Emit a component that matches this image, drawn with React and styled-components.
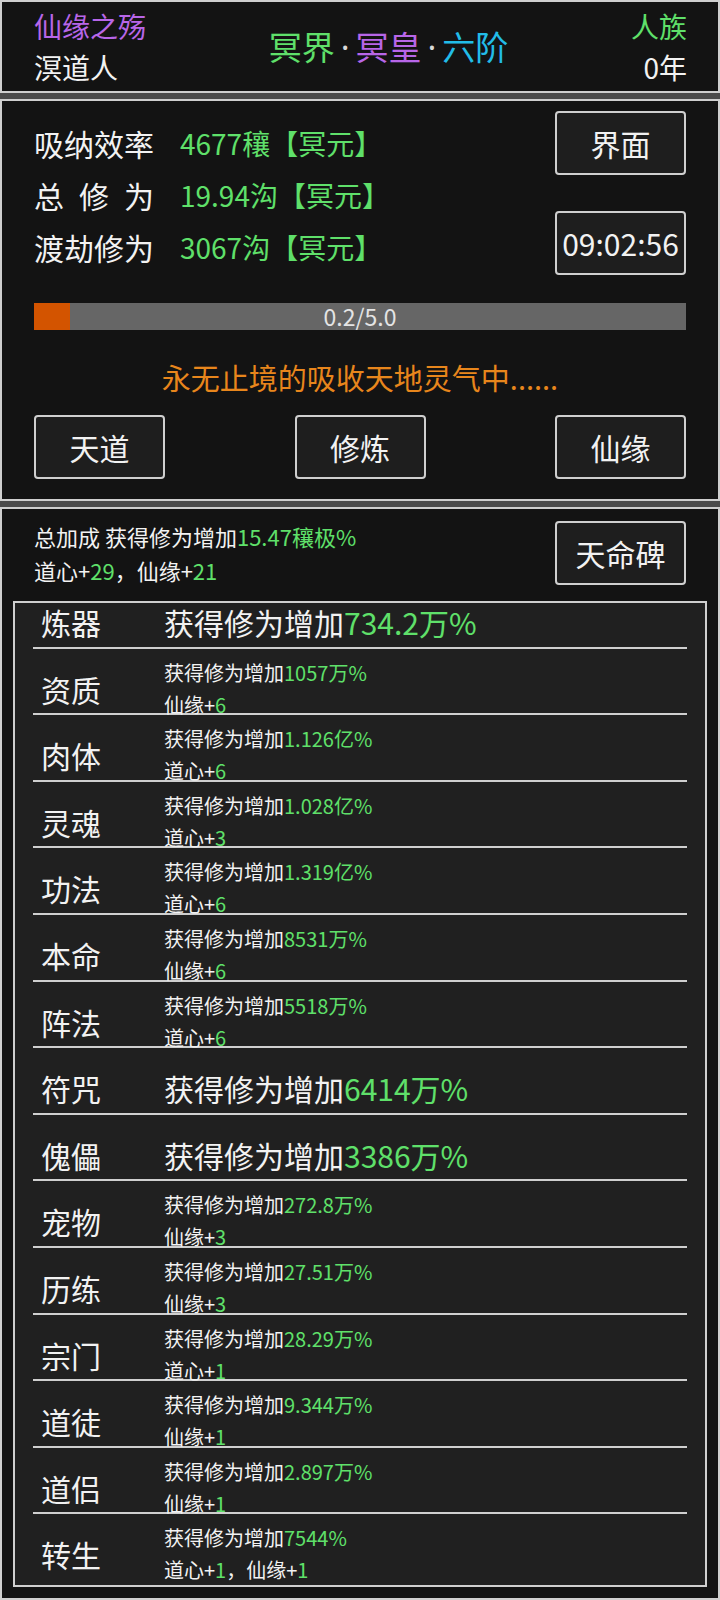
import React, { useLayoutEffect, useRef } from "react";
import styled, { createGlobalStyle } from "styled-components";

const GREEN = "#5fe06a";
const PURPLE = "#b866e8";
const CYAN = "#22bce8";
const ORANGE = "#e8861c";
const LINE = "#cfcfcf";

const GlobalStyle = createGlobalStyle`
  html, body {
    margin: 0;
    padding: 0;
    background: #4b4b4b;
  }
  body {
    font-family: "Noto Sans CJK SC", "Noto Sans", sans-serif;
    color: #f2f2f2;
  }
  * { box-sizing: border-box; }
`;

const stats = [
  { label: "吸纳效率", amount: "4677穰" },
  { label: "总修为", amount: "19.94沟", spread: true },
  { label: "渡劫修为", amount: "3067沟" },
];

const bonuses = [
  { name: "炼器", value: "734.2万%", big: true },
  { name: "资质", value: "1057万%", extra: [["仙缘", 6]] },
  { name: "肉体", value: "1.126亿%", extra: [["道心", 6]] },
  { name: "灵魂", value: "1.028亿%", extra: [["道心", 3]] },
  { name: "功法", value: "1.319亿%", extra: [["道心", 6]] },
  { name: "本命", value: "8531万%", extra: [["仙缘", 6]] },
  { name: "阵法", value: "5518万%", extra: [["道心", 6]] },
  { name: "符咒", value: "6414万%", big: true },
  { name: "傀儡", value: "3386万%", big: true },
  { name: "宠物", value: "272.8万%", extra: [["仙缘", 3]] },
  { name: "历练", value: "27.51万%", extra: [["仙缘", 3]] },
  { name: "宗门", value: "28.29万%", extra: [["道心", 1]] },
  { name: "道徒", value: "9.344万%", extra: [["仙缘", 1]] },
  { name: "道侣", value: "2.897万%", extra: [["仙缘", 1]] },
  { name: "转生", value: "7544%", extra: [["道心", 1], ["仙缘", 1]] },
];

const progress = { value: 0.2, max: 5.0 };

function App() {
  const listRef = useRef(null);

  // list sits scrolled to its end
  useLayoutEffect(() => {
    const el = listRef.current;
    if (el) el.scrollTop = el.scrollHeight;
  }, []);

  const fill = Math.max((progress.value / progress.max) * 100, 5.5);

  return (
    <Page>
      <GlobalStyle />

      <Panel $h={93}>
        <TopBar>
          <Side>
            <Tone $c={PURPLE}>仙缘之殇</Tone>
            <span>溟道人</span>
          </Side>
          <Title>
            <Tone $c={GREEN}>冥界</Tone>
            <Dot>·</Dot>
            <Tone $c={PURPLE}>冥皇</Tone>
            <Dot>·</Dot>
            <Tone $c={CYAN}>六阶</Tone>
          </Title>
          <Side $right>
            <Tone $c={GREEN}>人族</Tone>
            <span>0年</span>
          </Side>
        </TopBar>
      </Panel>

      <Panel $h={402}>
        <Cultivate>
          <TopRow>
            <Stats>
              {stats.map((s) => (
                <StatRow key={s.label}>
                  <Label $spread={s.spread}>
                    {s.spread
                      ? s.label.split("").map((ch) => <span key={ch}>{ch}</span>)
                      : s.label}
                  </Label>
                  <Value>
                    {s.amount}
                    <Unit>【冥元】</Unit>
                  </Value>
                </StatRow>
              ))}
            </Stats>
            <SideButtons>
              <Button>界面</Button>
              <Button>09:02:56</Button>
            </SideButtons>
          </TopRow>

          <Bar>
            <BarFill style={{ width: `${fill}%` }} />
            <BarText>
              {progress.value.toFixed(1)}/{progress.max.toFixed(1)}
            </BarText>
          </Bar>

          <Status>永无止境的吸收天地灵气中......</Status>

          <ButtonRow>
            <Button>天道</Button>
            <Button>修炼</Button>
            <Button>仙缘</Button>
          </ButtonRow>
        </Cultivate>
      </Panel>

      <Panel $grow>
        <Bonus>
          <BonusHead>
            <Summary>
              <div>
                总加成 获得修为增加<Tone $c={GREEN}>15.47穰极%</Tone>
              </div>
              <div>
                道心+<Tone $c={GREEN}>29</Tone>，仙缘+<Tone $c={GREEN}>21</Tone>
              </div>
            </Summary>
            <Button>天命碑</Button>
          </BonusHead>

          <ListBox ref={listRef}>
            <List>
              {bonuses.map((b) => (
                <Row key={b.name}>
                  <RowLabel>{b.name}</RowLabel>
                  <Effect $big={b.big}>
                    <div>
                      获得修为增加<Tone $c={GREEN}>{b.value}</Tone>
                    </div>
                    {b.extra && (
                      <div>
                        {b.extra.map(([k, n], i) => (
                          <React.Fragment key={k}>
                            {i > 0 && "，"}
                            {k}+<Tone $c={GREEN}>{n}</Tone>
                          </React.Fragment>
                        ))}
                      </div>
                    )}
                  </Effect>
                </Row>
              ))}
            </List>
          </ListBox>
        </Bonus>
      </Panel>
    </Page>
  );
}

export default App;

// styles
const Page = styled.div`
  display: flex;
  flex-direction: column;
  gap: 6px;
  width: 720px;
  height: 1600px;
  background: #4b4b4b;
`;

const Panel = styled.section`
  background: #131313;
  border: 2px solid ${LINE};
  height: ${(p) => (p.$h ? `${p.$h}px` : "auto")};
  flex: ${(p) => (p.$grow ? "1" : "none")};
  min-height: 0;
  display: flex;
  flex-direction: column;
`;

const Tone = styled.span`
  color: ${(p) => p.$c};
`;

const TopBar = styled.div`
  flex: 1;
  display: flex;
  align-items: center;
  justify-content: space-between;
  padding: 0 31px 0 32px;
`;

const Side = styled.div`
  display: flex;
  flex-direction: column;
  align-items: ${(p) => (p.$right ? "flex-end" : "flex-start")};
  font-size: 28px;
  line-height: 41px;
  color: #f2f2f2;
`;

const Title = styled.div`
  font-size: 33px;
  line-height: 1;
  display: flex;
  align-items: center;
`;

const Dot = styled.span`
  font-family: "Noto Sans", "DejaVu Sans", sans-serif;
  color: #d8d8d8;
  margin: 0 6px;
`;

const Cultivate = styled.div`
  flex: 1;
  display: flex;
  flex-direction: column;
  padding: 10px 32px 20px 32px;
`;

const TopRow = styled.div`
  display: flex;
  justify-content: space-between;
  height: 167px;
`;

const Stats = styled.div`
  display: flex;
  flex-direction: column;
  justify-content: center;
`;

const StatRow = styled.div`
  display: flex;
  align-items: center;
  height: 52px;
`;

const Label = styled.div`
  width: 120px;
  margin-right: 26px;
  font-size: 30px;
  line-height: 1;
  color: #f2f2f2;
  display: flex;
  justify-content: ${(p) => (p.$spread ? "space-between" : "flex-start")};
  white-space: nowrap;
`;

const Value = styled.div`
  font-size: 28px;
  line-height: 1;
  color: ${GREEN};
  white-space: nowrap;
`;

const Unit = styled.span`
  font-family: "Noto Sans CJK TC", "Noto Sans CJK SC", sans-serif;
`;

const SideButtons = styled.div`
  display: flex;
  flex-direction: column;
  justify-content: space-between;
  padding-bottom: 3px;
`;

const Button = styled.button`
  width: 131px;
  height: 64px;
  flex: none;
  border: 2px solid ${LINE};
  border-radius: 4px;
  background: #1e1e1e;
  color: #f2f2f2;
  font-family: inherit;
  font-size: 30px;
  line-height: 1;
  padding: 0;
  display: flex;
  align-items: center;
  justify-content: center;
`;

const Bar = styled.div`
  margin-top: 25px;
  height: 27px;
  background: #666666;
  display: grid;
`;

const BarFill = styled.div`
  grid-area: 1 / 1;
  justify-self: start;
  height: 100%;
  background: #d35400;
`;

const BarText = styled.div`
  grid-area: 1 / 1;
  justify-self: center;
  align-self: center;
  font-size: 23px;
  line-height: 1;
  color: #e4e4e4;
`;

const Status = styled.div`
  margin: 27px 0 18px;
  line-height: 40px;
  font-size: 29px;
  text-align: center;
  color: ${ORANGE};
`;

const ButtonRow = styled.div`
  display: flex;
  justify-content: space-between;
`;

const Bonus = styled.div`
  flex: 1;
  min-height: 0;
  display: flex;
  flex-direction: column;
  padding: 12px 11px 11px;
`;

const BonusHead = styled.div`
  display: flex;
  align-items: center;
  justify-content: space-between;
  height: 64px;
  margin-bottom: 16px;
  padding: 0 21px;
`;

const Summary = styled.div`
  font-size: 22px;
  line-height: 34px;
  color: #f2f2f2;
`;

const ListBox = styled.div`
  flex: 1;
  min-height: 0;
  overflow: hidden;
  border: 2px solid ${LINE};
  background: #202020;
`;

const List = styled.div`
  overflow: hidden;
  padding-bottom: 4px;
`;

const Row = styled.div`
  height: 66.6px;
  margin: 0 18px;
  padding-top: 16px;
  border-bottom: 2px solid ${LINE};
  display: grid;
  grid-template-columns: 131px 1fr;
  align-items: start;

  &:last-child {
    border-bottom: none;
  }
`;

const RowLabel = styled.div`
  padding-left: 8px;
  font-size: 30px;
  line-height: 48px;
  color: #f2f2f2;
`;

const Effect = styled.div`
  display: flex;
  flex-direction: column;
  gap: ${(p) => (p.$big ? "0" : "12px")};
  margin-top: ${(p) => (p.$big ? "0" : "-2px")};
  font-size: ${(p) => (p.$big ? "30px" : "20px")};
  line-height: ${(p) => (p.$big ? "48px" : "20px")};
  color: #f2f2f2;
  white-space: nowrap;
`;
